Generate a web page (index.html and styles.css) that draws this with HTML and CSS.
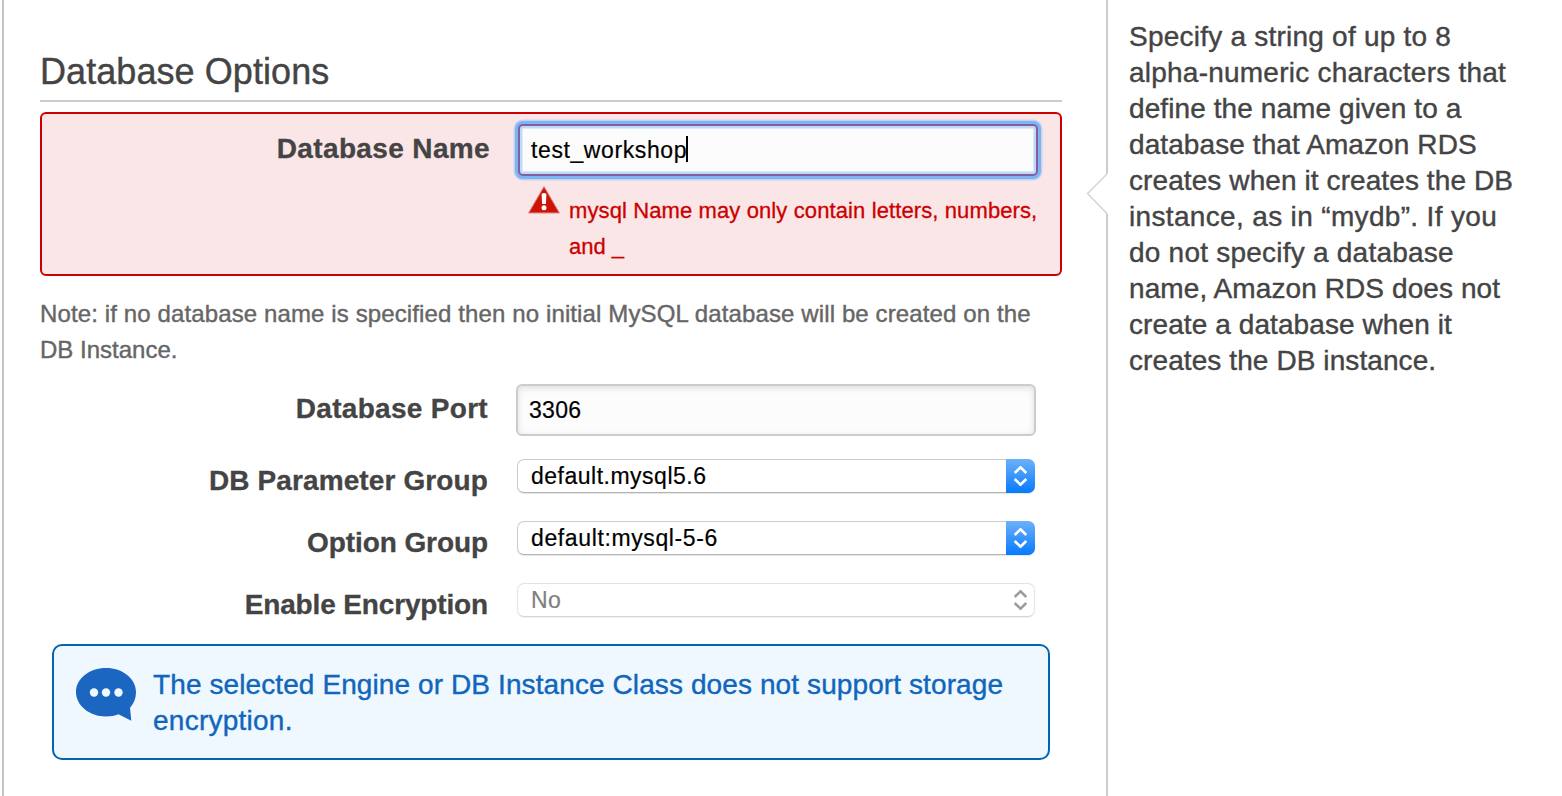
FILE: index.html
```html
<!DOCTYPE html>
<html lang="en">
<head>
<meta charset="utf-8">
<title>Database Options</title>
<link rel="stylesheet" href="styles.css">
</head>
<body>
<div class="page">
  <main class="options">
    <h2 class="title"><span>Database Options</span></h2>
    <section class="field-error">
      <label class="label l-name">Database Name</label>
      <div class="error-body">
        <div class="input input-focus"><span class="name-value">test_workshop</span><i class="caret"></i></div>
        <div class="error-message">
          <svg class="warning" width="32" height="28" viewBox="0 0 32 28"><path d="M16 .5 31.500 27H.5Z" fill="#cc1508" stroke="#e58a82" stroke-width="1"/><path d="M13.600 8q2.400-2 4.800 0l-.5 10h-3.800z" fill="#fff"/><circle cx="16" cy="21.800" r="2.500" fill="#fff"/></svg>
          <p class="error-text"><span class="e1">mysql Name may only contain letters, numbers,</span><br><span class="e2">and _</span></p>
        </div>
      </div>
    </section>
    <p class="note"><span class="n1">Note: if no database name is specified then no initial MySQL database will be created on the</span><br><span class="n2">DB Instance.</span></p>
    <div class="row row-port"><label class="label l-port">Database Port</label><div class="input"><span class="port-value">3306</span></div></div>
    <div class="row"><label class="label l-param">DB Parameter Group</label>
      <div class="select"><span class="v-param">default.mysql5.6</span><b class="stepper"><svg width="14" height="20" viewBox="0 0 14 20"><path d="M.7 7 6.500 1.300 12.300 7M.7 13l5.800 5.700L12.300 13"/></svg></b></div></div>
    <div class="row"><label class="label l-option">Option Group</label>
      <div class="select"><span class="v-option">default:mysql-5-6</span><b class="stepper"><svg width="14" height="20" viewBox="0 0 14 20"><path d="M.7 7 6.500 1.300 12.300 7M.7 13l5.800 5.700L12.300 13"/></svg></b></div></div>
    <div class="row"><label class="label l-enc">Enable Encryption</label>
      <div class="select select-disabled"><span class="v-no">No</span><b class="stepper"><svg width="14" height="20" viewBox="0 0 14 20"><path d="M.7 7 6.500 1.300 12.300 7M.7 13l5.800 5.700L12.300 13"/></svg></b></div></div>
    <section class="info">
      <svg class="bubble" width="62" height="56" viewBox="0 0 62 56"><path d="M31 1C14.500 1 1 11.500 1 25s13.500 24.500 30 24.500c4.500 0 9-.8 12.500-2.200l12.800 6.500-1.300-13C59 36.500 61 31 61 25 61 11.500 47.500 1 31 1Z" fill="#1b66c0"/><g fill="#f0f8ff"><circle cx="19" cy="25.500" r="4.200"/><circle cx="31" cy="25.500" r="4.200"/><circle cx="43.500" cy="25.500" r="4.200"/></g></svg>
      <p class="info-text"><span class="i1">The selected Engine or DB Instance Class does not support storage</span><br><span class="i2">encryption.</span></p>
    </section>
  </main>
  <aside class="help">
    <svg class="pointer" width="22" height="42" viewBox="0 0 22 42"><path d="M22 0 1.500 20.500 22 41Z" fill="#fff"/><path d="M21 1 1.500 20.500 21 40.500" fill="none" stroke="#d2d2d2" stroke-width="1.400"/></svg>
    <p class="help-text"><span class="wide">Specify a string of up to 8</span><br><span class="wide">alpha-numeric characters that</span><br>define the name given to a<br>database that Amazon RDS<br>creates when it creates the DB<br><span class="wider">instance, as in “mydb”. If you</span><br><span class="wide">do not specify a database</span><br>name, Amazon RDS does not<br>create a database when it<br>creates the DB instance.</p>
  </aside>
</div>
</body>
</html>
```
FILE: styles.css
```css
* { box-sizing: border-box; }
body { margin: 0; background: #fff; font-family: "Liberation Sans", Arial, sans-serif; color: #444; overflow: hidden; }
p, h2 { margin: 0; }
.page { display: flex; height: 796px; padding-left: 2px; white-space: nowrap; }

.options { width: 1106px; flex: none; border-left: 2px solid #c3c3c3; border-right: 2px solid #ccc; padding: 46px 44px 0 36px; }
.title { height: 56px; border-bottom: 2px solid #ccc; font-size: 36px; line-height: 52px; font-weight: 400; letter-spacing: .07px; -webkit-text-stroke: .4px; }

.field-error { height: 164px; margin-top: 10px; border: 2px solid #c00; border-radius: 6px; background: #fae6e6; display: flex; padding: 10px 20px 0 0; }
.error-body { margin-left: 28px; }
.error-message { display: flex; padding: 10px 0 0 10px; }
.error-text { font-size: 22px; line-height: 36px; color: #c00; margin: 7px 0 0 9px; -webkit-text-stroke: .3px; }
.e1 { letter-spacing: .11px; }

.label { flex: none; width: 448px; text-align: right; font-weight: 700; font-size: 28px; line-height: 50px; -webkit-text-stroke: .3px; }
.l-name { letter-spacing: .36px; }
.l-port { letter-spacing: .3px; }
.l-param, .l-option, .l-enc { line-height: 44px; }
.l-param { letter-spacing: .12px; }
.l-option { letter-spacing: -.08px; }
.l-enc { letter-spacing: -.15px; }

.input { width: 520px; height: 52px; border: 2px solid #ccc; border-radius: 6px; background: #fcfcfc; box-shadow: inset 0 2px 6px #ddd; display: flex; align-items: center; padding: 0 0 0 11px; font-size: 23px; color: #000; -webkit-text-stroke: .2px; }
.input-focus { border-color: #845fa0; border-radius: 5px; box-shadow: 0 0 0 3px #7eb4f3, 0 0 0 4.500px #c3d2ef, inset 0 0 0 2px #bddaf8, inset 0 0 0 3px #daeaf9; }
.caret { width: 2px; height: 26px; margin: -2px 0 0 -1px; background: #000; }
.name-value { letter-spacing: .6px; }
.port-value { letter-spacing: .3px; }

.note { margin-top: 20px; font-size: 24px; line-height: 36px; color: #666; -webkit-text-stroke: .4px; }
.n1 { letter-spacing: .12px; }

.row { display: flex; height: 62px; gap: 29px; }
.row-port { height: 75px; margin-top: 16px; gap: 28px; }

.select { width: 518px; height: 34px; border: 1px solid #ccc; border-bottom-color: #b3b3b3; border-radius: 7px; box-shadow: 0 1px 1px #e5e5e5; display: flex; align-items: center; justify-content: space-between; padding-left: 13px; font-size: 23px; line-height: 26px; color: #000; -webkit-text-stroke: .2px; }
.v-param { letter-spacing: .5px; }
.v-option { letter-spacing: .62px; }
.v-no { letter-spacing: .4px; }
.stepper { width: 29px; height: 34px; margin: -1px; flex: none; border-radius: 0 7px 7px 0; background: linear-gradient(#6cb1fa, #067aff); display: grid; place-items: center; }
.stepper path { fill: none; stroke: #fff; stroke-width: 2.600; }
.select-disabled { color: #808080; border-color: #e3e3e3; border-bottom-color: #d5d5d5; box-shadow: 0 1px 1px #f2f2f2; }
.select-disabled .stepper { background: none; }
.select-disabled .stepper path { stroke: #9e9e9e; }

.info { width: 998px; height: 116px; margin: -1px 0 0 12px; border: 2px solid #0066b3; border-radius: 10px; background: #f0f8ff; display: flex; padding: 21px 0 0 21px; }
.info-text { margin-left: 16px; font-size: 28px; line-height: 36px; color: #1166bb; -webkit-text-stroke: .4px; }
.i1 { letter-spacing: .1px; }
.i2 { letter-spacing: .25px; }

.help { position: relative; padding: 19px 0 0 21px; }
.help-text { font-size: 28px; line-height: 36px; letter-spacing: .09px; -webkit-text-stroke: .4px; }
.wide { letter-spacing: .23px; }
.wider { letter-spacing: .34px; }
.pointer { position: absolute; left: -22px; top: 173px; }
```
